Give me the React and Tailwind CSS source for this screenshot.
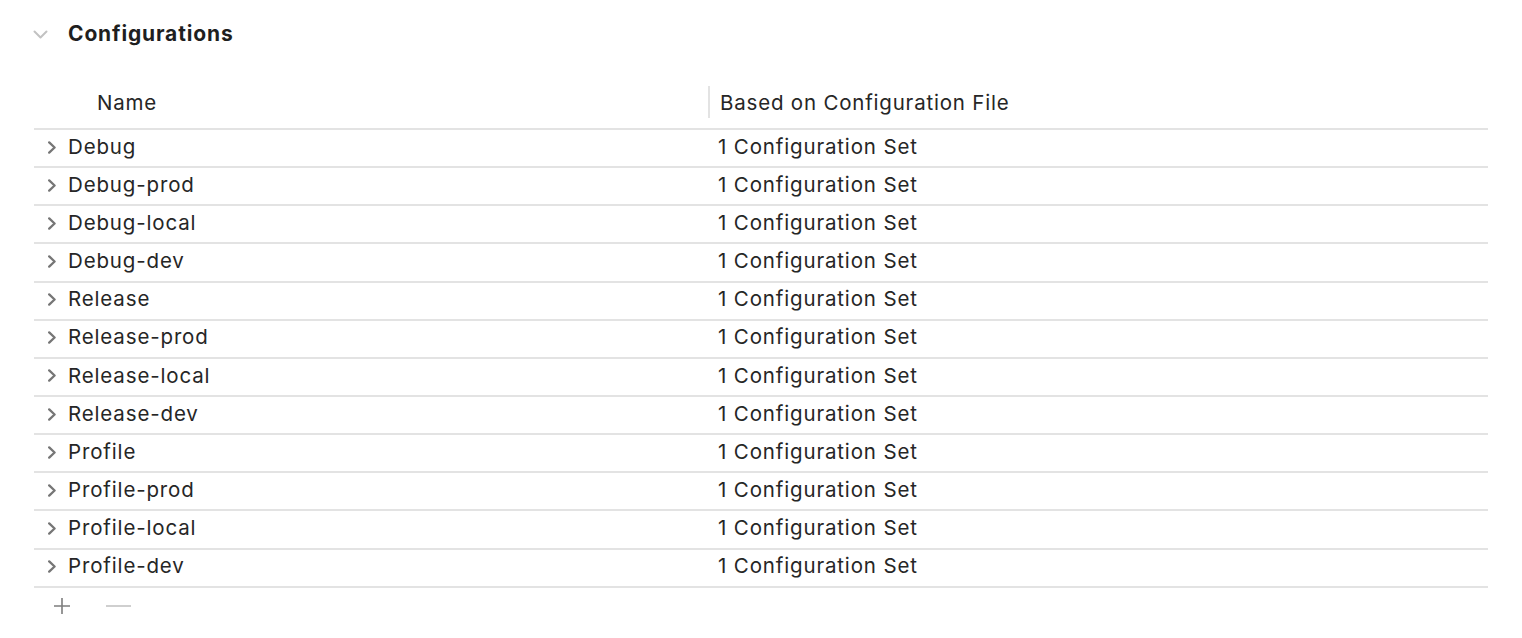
import React from 'react';

const configs = [
  'Debug',
  'Debug-prod',
  'Debug-local',
  'Debug-dev',
  'Release',
  'Release-prod',
  'Release-local',
  'Release-dev',
  'Profile',
  'Profile-prod',
  'Profile-local',
  'Profile-dev',
];

const ChevronRight = () => (
  <svg className="h-[13px] w-[10px] text-[#767676]" viewBox="0 0 10 13" fill="none" stroke="currentColor">
    <path d="M2.2 1.4l5.4 5.1-5.4 5.1" strokeWidth={2.3} strokeLinecap="round" strokeLinejoin="round" />
  </svg>
);

function App() {
  return (
    <div
      className="w-[1522px] h-[638px] bg-white text-[#262626] overflow-hidden"
      style={{ fontFamily: 'Inter, "Noto Sans", sans-serif' }}
    >
      {/* section header */}
      <div className="flex items-center h-[68px] pl-[33px]">
        <svg className="h-[9px] w-[15px] text-[#c2c2c2]" viewBox="0 0 15 9" fill="none" stroke="currentColor">
          <path d="M1.5 1.5l6 6 6-6" strokeWidth={2} strokeLinecap="round" strokeLinejoin="round" />
        </svg>
        <h2 className="ml-[20px] text-[21px] font-bold tracking-[0.85px] text-[#1f1f1f]">Configurations</h2>
      </div>

      <div className="mx-[34px] mt-[17px]">
        {/* column headers */}
        <div className="flex items-center h-[45px] border-b-2 border-[#e3e3e3]">
          <div className="w-[674px] pl-[63px] text-[20.5px] tracking-[0.8px] -mt-[6px]">Name</div>
          <div className="h-[32px] w-[2px] bg-[#e3e3e3] -mt-[9px]" />
          <div className="pl-[10px] text-[20.5px] tracking-[0.8px] -mt-[6px]">Based on Configuration File</div>
        </div>

        {configs.map((name) => (
          <div key={name} className="flex items-center h-[38.15px] pb-[2px] border-b-2 border-[#e3e3e3]">
            <div className="w-[684px] flex items-center pl-[13px]">
              <ChevronRight />
              <span className="ml-[11px] text-[20.5px] tracking-[0.85px]">{name}</span>
            </div>
            <div className="text-[20.5px] tracking-[0.85px]">1 Configuration Set</div>
          </div>
        ))}

        {/* add / remove */}
        <div className="flex items-center h-[36px] pl-[19px]">
          <svg className="h-[18px] w-[18px] text-[#7d7d7d]" viewBox="0 0 18 18" stroke="currentColor">
            <path d="M9 1v16M1 9h16" strokeWidth={1.6} />
          </svg>
          <svg className="ml-[34px] h-[4px] w-[27px] text-[#cacaca]" viewBox="0 0 27 4" stroke="currentColor">
            <path d="M1 2h25" strokeWidth={1.8} />
          </svg>
        </div>
      </div>
    </div>
  );
}

export default App;
